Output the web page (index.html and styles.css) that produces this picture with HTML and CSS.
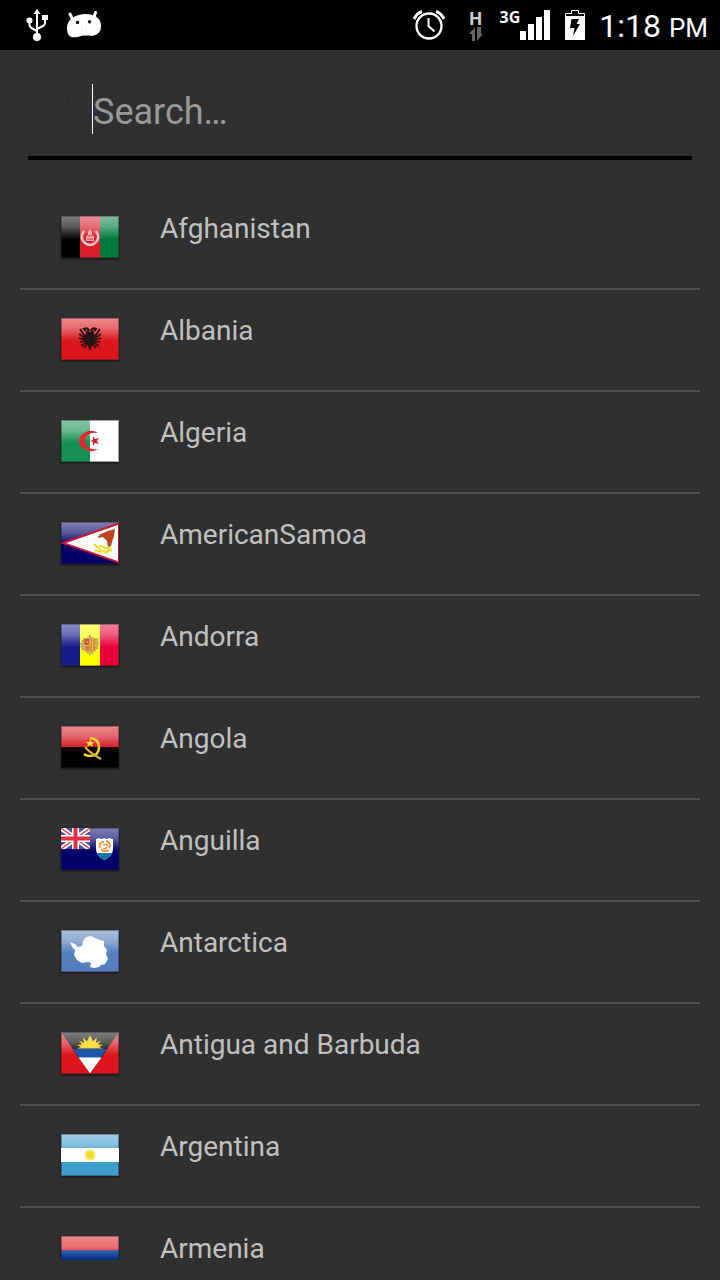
FILE: index.html
```html
<!DOCTYPE html>
<html lang="en">
<head>
<meta charset="utf-8">
<meta name="viewport" content="width=device-width, initial-scale=1">
<title>Countries</title>
<link rel="stylesheet" href="styles.css">
</head>
<body>
<svg class="defs" width="0" height="0" aria-hidden="true">
  <defs>
    <linearGradient id="shine" x1="0" y1="0" x2="0" y2="1">
      <stop offset="0" stop-color="#fff" stop-opacity=".5"/>
      <stop offset=".25" stop-color="#fff" stop-opacity=".36"/>
      <stop offset=".48" stop-color="#fff" stop-opacity=".08"/>
      <stop offset=".56" stop-color="#fff" stop-opacity="0"/>
    </linearGradient>
    <g id="gloss">
      <rect width="58" height="42" fill="url(#shine)"/>
      <rect x=".5" y=".5" width="57" height="41" fill="none" stroke="#222" stroke-opacity=".4"/>
    </g>
  </defs>
</svg>

<header class="status">
  <div class="status-left">
    <svg width="22" height="34" viewBox="0 0 22 34" role="img" aria-label="USB">
      <g fill="none" stroke="#fff" stroke-width="2"><path d="M11 4v25M3.500 12v5q0 2 2 3l5.500 3M19 10v5q0 2-2 3l-6 3"/></g>
      <path d="M11 1l3.500 5h-7zM16 7h6v5h-6z" fill="#fff"/>
      <circle cx="3.500" cy="12.500" r="3" fill="#fff"/><circle cx="11" cy="29" r="4" fill="#fff"/>
    </svg>
    <svg width="36" height="28" viewBox="0 0 36 28" role="img" aria-label="Android">
      <path d="M4 3l2.500 5M29.500 1.500L28 6" stroke="#fff" stroke-width="3" stroke-linecap="round"/>
      <path d="M7 6.500Q12 3 20 3q5 0 9 2 6 3 6 10 0 8-7 9.500c-4 .5-9-.3-13 .5q-3 1.500-8 1.300C2 26 1 21 1 17q0-7 6-10.500z" fill="#fff"/>
      <circle cx="11.500" cy="11.500" r="1.700"/><circle cx="23.500" cy="10.700" r="1.700"/>
      <path d="M15 17h1M15 20h1M19 19h1" stroke="#ccc"/>
    </svg>
  </div>
  <div class="status-right">
    <svg class="alarm" width="34" height="32" viewBox="0 0 34 32" role="img" aria-label="Alarm">
      <g fill="none" stroke="#fff"><circle cx="17" cy="17" r="12.500" stroke-width="2.300"/><path d="M16.500 9v8l6 5.500" stroke-width="2"/><path d="M2 10Q5 4 10 2.500M32 10q-3-6-8-7.500" stroke-width="3"/></g>
    </svg>
    <span class="data">
      <span class="data-h">H</span>
      <svg width="14" height="14" viewBox="0 0 14 14" aria-hidden="true"><path d="M6 14V0L0 7h3v7zM8 0v14l6-7h-2V0z" fill="#666"/></svg>
    </span>
    <span class="network">3G</span>
    <svg class="bars" width="30" height="30" viewBox="0 0 30 30" role="img" aria-label="Signal"><path d="M0 21h6v9H0zM8 14h6v16H8zM16 7h6v23h-6zM24 0h6v30h-6z" fill="#fff"/></svg>
    <svg class="battery" width="20" height="30" viewBox="0 0 20 30" role="img" aria-label="Battery charging"><path d="M.5 6V3.500h6V.5h7v3h6V6" fill="none" stroke="#fff"/><path d="M0 6h20v24H0z" fill="#fff"/><path d="M6.500 9H14l-2.500 5H15L8 26l1.500-8H5z"/></svg>
    <time class="clock">1:18 <small class="ampm">PM</small></time>
  </div>
</header>

<main class="screen">
  <form class="search">
    <svg class="search-icon" width="46" height="46" viewBox="0 0 46 46" aria-hidden="true"><circle cx="17" cy="17" r="14" fill="none" stroke="#2e2e2e" stroke-width="2"/><path d="M27 28l4-1 11 11-4 6z" fill="#2e2e2e"/></svg>
    <input class="search-input" type="text" placeholder="Search…" aria-label="Search">
  </form>

  <ul class="countries">
    <li class="country">
      <svg class="flag" viewBox="0 0 58 42" aria-hidden="true"><path d="M0 0h19v42H0z"/><path d="M19 0h20v42H19z" fill="#d81e2a"/><path d="M39 0h19v42H39z" fill="#007a3d"/><use href="#gloss"/><g fill="none" stroke="#f6c4c6"><path d="M23 15q-5 7 1 12 5 4 10 0 6-5 1-12" stroke-width="2.500"/></g><path d="M25 25v-4l2-2v-3l2-3 2 3v3l2 2v4z" fill="#f3b2b5"/><path d="M27 20h4M26 23h6" stroke="#d8303c"/></svg>
      <span class="name">Afghanistan</span>
    </li>
    <li class="country">
      <svg class="flag" viewBox="0 0 58 42" aria-hidden="true"><path d="M0 0h58v42H0z" fill="#dc141b"/><use href="#gloss"/><g fill="none" stroke="#2a1216"><path d="M28 13q-1-4-5-2l2 2M30 13q1-4 5-2l-2 2" stroke-width="2"/><path d="M25 20l-6-9M25 21l-7-5M25 22l-7-2M25 23l-6 1M26 24l-6 4M33 20l6-9M33 21l7-5M33 22l7-2M33 23l6 1M32 24l6 4M27 25l-4 5M31 25l4 5" stroke-width="1.700"/></g><path d="M26 12l3 2 3-2 2 6-1 8-2 2-2 5-2-5-2-2-1-8z" fill="#241418"/></svg>
      <span class="name">Albania</span>
    </li>
    <li class="country">
      <svg class="flag" viewBox="0 0 58 42" aria-hidden="true"><path d="M0 0h58v42H0z" fill="#fff"/><path d="M0 0h29v42H0z" fill="#168f50"/><use href="#gloss"/><path d="M37 13q-6-4-12-1-7 3-7 9t7 9q6 3 12-1-7 1-10-2-3-2-3-6t3-6q3-3 10-2z" fill="#e02833"/><path d="M29 21l3-1v-4l2 3 4-1-2 3 2 3-4-1-2 3v-4z" fill="#df1f2e"/></svg>
      <span class="name">Algeria</span>
    </li>
    <li class="country">
      <svg class="flag" viewBox="0 0 58 42" aria-hidden="true"><path d="M0 0h58v42H0z" fill="#000068"/><use href="#gloss"/><path d="M58 1.500L2 21l56 19.500z" fill="#fff" stroke="#d0142e" stroke-width="2"/><path d="M54 7q-8 2-12 4-5 2-5 5l5-1 4 4 1 6 3-1 1-4 2-6z" fill="#b8471f"/><path d="M33 22l3 3 4-1 4 2 5 0-3 3 5-1M34 28l5 2 4-1 4 2M37 25l4 5" fill="none" stroke="#e9df2c" stroke-width="2"/></svg>
      <span class="name">AmericanSamoa</span>
    </li>
    <li class="country">
      <svg class="flag" viewBox="0 0 58 42" aria-hidden="true"><path d="M0 0h19v42H0z" fill="#151c8c"/><path d="M19 0h20v42H19z" fill="#ff0"/><path d="M39 0h19v42H39z" fill="#e8003a"/><use href="#gloss"/><path d="M23 15l3 0 3-3 3 3 4 0 1 4-1 5-3 3-4 3-4-3-4-2-1-5z" fill="#c9b36b" stroke="#b9a175" stroke-width="2" stroke-dasharray="2 1"/><path d="M23.500 15H28v6h-4.500z" fill="#dd4c35"/><path d="M29.500 15H34v6h-4.500z" fill="#df8d20"/><path d="M24 22h4.500v5L25 26zM29.500 22H34v3l-4.500 2z" fill="#e3761b"/><path d="M25 17l2 2M31.500 15v5M31.500 22v4" stroke="#f5c85a"/></svg>
      <span class="name">Andorra</span>
    </li>
    <li class="country">
      <svg class="flag" viewBox="0 0 58 42" aria-hidden="true"><path d="M0 0h58v21H0z" fill="#d4101c"/><path d="M0 21h58v21H0z"/><use href="#gloss"/><path d="M29 12q9 1 9 9 0 9-9 9-4 0-6-2" fill="none" stroke="#f0d433" stroke-width="2.500"/><path d="M24 21q5 6 16 12" fill="none" stroke="#d5b722" stroke-width="2"/><path d="M29 13.500l1 2.500h3l-2 2 1 3-3-2-3 2 1-3-2-2h3z" fill="#ffe12b"/></svg>
      <span class="name">Angola</span>
    </li>
    <li class="country">
      <svg class="flag" viewBox="0 0 58 42" aria-hidden="true"><path d="M0 0h58v42H0z" fill="#00006a"/><use href="#gloss"/><svg width="29" height="21" viewBox="0 0 29 21"><path d="M0 0h29v21H0z" fill="#50509a"/><path d="M0 0l29 21M29 0L0 21" stroke="#fff" stroke-width="5"/><path d="M0 0l29 21M29 0L0 21" stroke="#df5262" stroke-width="1.500"/><path d="M14.500 0v21M0 10.500h29" stroke="#fff" stroke-width="7"/><path d="M14.500 0v21M0 10.500h29" stroke="#dc3146" stroke-width="4"/></svg><path d="M35 11q2 0 3-1 3 2 5 0 3 2 5 0 2 1 4 1v10q0 7-8.500 11Q35 28 35 21z" fill="#fff"/><path d="M36 25h15.500q-2 4-8 7-6-3-7.500-7z" fill="#0d75a8"/><g fill="none" stroke="#ee963e" stroke-width="2"><path d="M39 20q-2-6 4-6M45 13q6 2 3 7M48 22q-5 3-8-1"/><path d="M42 17q3-2 5 1M46 19q-1 3-4 1" stroke-width="1.500"/></g></svg>
      <span class="name">Anguilla</span>
    </li>
    <li class="country">
      <svg class="flag" viewBox="0 0 58 42" aria-hidden="true"><path d="M0 0h58v42H0z" fill="#557fbc"/><use href="#gloss"/><path d="M9 12l5 2 3 3 4-1 1-5 3-4 5-1 4 2 5 2 4 1v5l3 4-1 4 2 5-3 5-4 1-2 2-5 1-4-1 1-4-3-1-6 1-5-3-3-5 1-5-3-3z" fill="#fff"/></svg>
      <span class="name">Antarctica</span>
    </li>
    <li class="country">
      <svg class="flag" viewBox="0 0 58 42" aria-hidden="true"><path d="M0 0h58v42H0z" fill="#dc141b"/><path d="M0 0h58L29 42z"/><use href="#gloss"/><path d="M12 17h34l-6 9H18z" fill="#1759a8"/><path d="M17.500 25.500h23L29 41.500z" fill="#fff"/><path d="M16 16.500l4-1.500-4-2 5-.5-3-4 5 2.500-1-6 4 4.500L29 3l3 6.500L36 5l-1 6 5-2.500-3 4 5 .5-4 2 4 1.500z" fill="#f7df45"/></svg>
      <span class="name">Antigua and Barbuda</span>
    </li>
    <li class="country">
      <svg class="flag" viewBox="0 0 58 42" aria-hidden="true"><path d="M0 0h58v42H0z" fill="#3f9dcb"/><use href="#gloss"/><path d="M0 14h58v14H0z" fill="#fff"/><circle cx="29" cy="21" r="5.500" fill="#f5e86a"/><circle cx="29" cy="21" r="3.500" fill="#f0dc24"/></svg>
      <span class="name">Argentina</span>
    </li>
    <li class="country">
      <svg class="flag" viewBox="0 0 58 42" aria-hidden="true"><path d="M0 0h58v14H0z" fill="#e01b22"/><path d="M0 14h58v14H0z" fill="#00308f"/><path d="M0 28h58v14H0z" fill="#f2a800"/><use href="#gloss"/></svg>
      <span class="name">Armenia</span>
    </li>
  </ul>
</main>
</body>
</html>
```
FILE: styles.css
```css
* {
  box-sizing: border-box;
}

body {
  display: flex;
  flex-direction: column;
  height: 100vh;
  margin: 0;
  overflow: hidden;
  background: #303030;
  color: #c0c0c0;
  font-family: Roboto, "Noto Sans", sans-serif;
}

.defs {
  position: absolute;
}

.status {
  display: flex;
  flex: none;
  justify-content: space-between;
  height: 50px;
  padding: 0 12px 0 26px;
  background: #000;
  color: #fff;
}

.status-left,
.status-right {
  display: flex;
  align-items: center;
}

.status-left {
  gap: 18px;
}

.alarm {
  margin-right: 22px;
}

.data {
  display: flex;
  flex-direction: column;
  align-items: center;
  width: 16px;
  margin-right: 16px;
}

.data-h {
  color: #ccc;
  font-family: "Open Sans", "Noto Sans", sans-serif;
  font-size: 18px;
  font-weight: 700;
  line-height: 17px;
}

.network {
  align-self: flex-start;
  margin-top: 8px;
  font-family: "Open Sans", "Noto Sans", sans-serif;
  font-size: 16px;
  font-weight: 700;
  line-height: 18px;
}

.bars {
  margin-right: 15px;
}

.battery {
  margin-right: 14px;
}

.clock {
  padding-top: 4px;
  font-size: 32px;
  line-height: 46px;
}

.ampm {
  font-size: 26px;
}

.screen {
  display: flex;
  flex: 1;
  flex-direction: column;
  min-height: 0;
  padding: 16px 20px 20px;
}

.search {
  display: flex;
  flex: none;
  align-items: center;
  height: 94px;
  margin: 0 8px;
  padding: 0 10px 4px;
  border-bottom: 4px solid #000;
}

.search-icon {
  flex: none;
  margin-right: 8px;
}

.search-input {
  flex: 1;
  min-width: 0;
  height: 50px;
  padding: 5px 0 0;
  border: 0;
  border-left: 1px solid #fff;
  outline: 0;
  background: transparent;
  color: #fff;
  font: 36px Roboto, "Noto Sans", sans-serif;
}

.search-input::placeholder {
  color: #999;
  opacity: 1;
}

.countries {
  flex: 1;
  min-height: 0;
  margin: 28px 0 0;
  padding: 0;
  overflow: hidden;
  list-style: none;
}

.country {
  display: flex;
  gap: 41px;
  height: 102px;
  padding: 28px 20px 0 41px;
  border-bottom: 2px solid #505050;
}

.flag {
  flex: none;
  width: 58px;
  height: 42px;
  box-shadow: 0 1px 2px #111;
}

.name {
  font-size: 28px;
  line-height: 26px;
}
```
